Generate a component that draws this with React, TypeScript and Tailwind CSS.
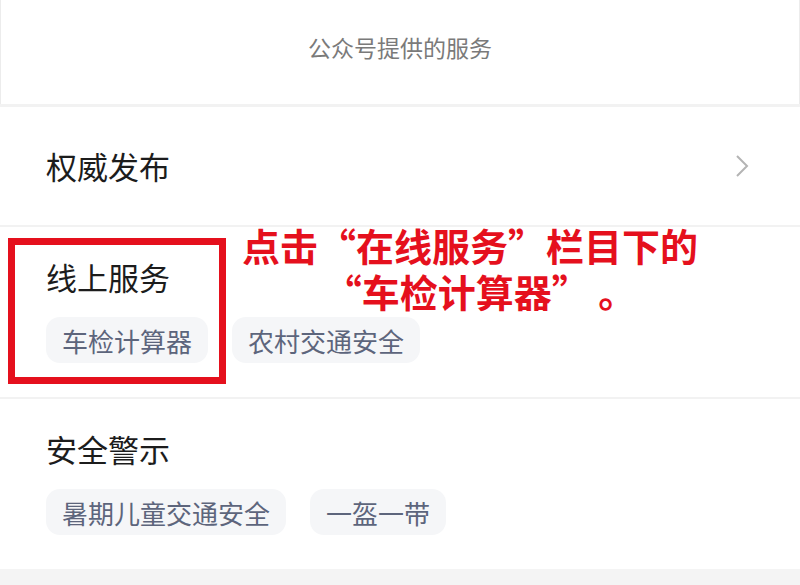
import React from "react";

interface Section {
  title: string;
  tags: string[];
}

const sections: Section[] = [
  { title: "线上服务", tags: ["车检计算器", "农村交通安全"] },
  { title: "安全警示", tags: ["暑期儿童交通安全", "一盔一带"] },
];

const font = {
  fontFamily: '"Noto Sans CJK SC", "Noto Sans", sans-serif',
};

const Tag: React.FC<{ label: string }> = ({ label }) => (
  <span className="h-[46px] px-[16px] flex items-center rounded-[14px] bg-[#f5f6f8] text-[26px] text-[#5d657c]">
    {label}
  </span>
);

const App: React.FC = () => {
  return (
    <div className="relative w-[800px] h-[585px] overflow-hidden bg-white" style={font}>
      <div className="h-[104px] pb-[10px] flex items-center justify-center text-[23px] text-[#7a7a7a] border-x border-[#ececec]">
        公众号提供的服务
      </div>
      <div className="h-[3px] bg-[#f2f2f2]" />

      <div className="h-[118px] px-[46px] flex items-center justify-between">
        <span className="text-[31px] text-[#1c1c1c]">权威发布</span>
        <svg width="16" height="26" viewBox="0 0 16 26" className="mr-[4px]">
          <path d="M3 3 L13 13 L3 23" fill="none" stroke="#b4b4b4" strokeWidth="2" />
        </svg>
      </div>

      {sections.map((s, i) => (
        <div key={i}>
          <div className="h-[2px] bg-[#f2f2f2]" />
          <div className="px-[46px] pt-[32px] pb-[34px]">
            <div className="text-[31px] leading-[36px] text-[#1c1c1c]">{s.title}</div>
            <div className="mt-[22px] flex gap-[24px]">
              {s.tags.map(t => (
                <Tag key={t} label={t} />
              ))}
            </div>
          </div>
        </div>
      ))}

      <div className="h-[20px] bg-[#f4f4f4]" />

      {/* annotation overlay */}
      <div className="absolute left-[8px] top-[238px] w-[218px] h-[146px] border-[7px] border-[#e5101d]" />
      <div className="absolute left-[232px] top-[222px] w-[476px] text-center text-[38px] leading-[46px] font-bold text-[#e5101d]">
        <div>点击“在线服务”栏目下的</div>
        <div className="pl-[20px]">“车检计算器”&nbsp;。</div>
      </div>
    </div>
  );
};

export default App;
